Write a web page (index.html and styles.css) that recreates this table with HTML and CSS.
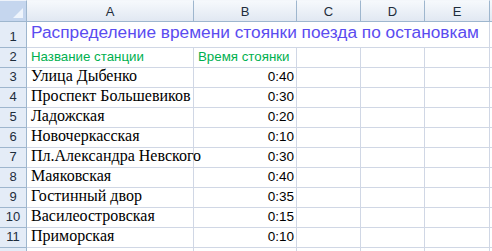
FILE: index.html
```html
<!DOCTYPE html>
<html lang="ru">
<head>
<meta charset="utf-8">
<link rel="stylesheet" href="styles.css">
</head>
<body>
<div class="sheet">
  <div class="corner"><span class="tri"></span></div>
  <div class="colhead">A</div>
  <div class="colhead">B</div>
  <div class="colhead">C</div>
  <div class="colhead">D</div>
  <div class="colhead">E</div>
  <div class="colhead tail"></div>

  <div class="rowhead">1</div>
  <div class="cell title span5">Распределение времени стоянки поезда по остановкам</div>
  <div class="cell tail"></div>

  <div class="rowhead">2</div>
  <div class="cell green">Название станции</div>
  <div class="cell green">Время стоянки</div>
  <div class="cell"></div><div class="cell"></div><div class="cell"></div><div class="cell tail"></div>

  <div class="rowhead">3</div>
  <div class="cell serif">Улица Дыбенко</div>
  <div class="cell num">0:40</div>
  <div class="cell"></div><div class="cell"></div><div class="cell"></div><div class="cell tail"></div>

  <div class="rowhead">4</div>
  <div class="cell serif">Проспект Большевиков</div>
  <div class="cell num">0:30</div>
  <div class="cell"></div><div class="cell"></div><div class="cell"></div><div class="cell tail"></div>

  <div class="rowhead">5</div>
  <div class="cell serif">Ладожская</div>
  <div class="cell num">0:20</div>
  <div class="cell"></div><div class="cell"></div><div class="cell"></div><div class="cell tail"></div>

  <div class="rowhead">6</div>
  <div class="cell serif">Новочеркасская</div>
  <div class="cell num">0:10</div>
  <div class="cell"></div><div class="cell"></div><div class="cell"></div><div class="cell tail"></div>

  <div class="rowhead">7</div>
  <div class="cell serif">Пл.Александра Невского</div>
  <div class="cell num">0:30</div>
  <div class="cell"></div><div class="cell"></div><div class="cell"></div><div class="cell tail"></div>

  <div class="rowhead">8</div>
  <div class="cell serif">Маяковская</div>
  <div class="cell num">0:40</div>
  <div class="cell"></div><div class="cell"></div><div class="cell"></div><div class="cell tail"></div>

  <div class="rowhead">9</div>
  <div class="cell serif">Гостинный двор</div>
  <div class="cell num">0:35</div>
  <div class="cell"></div><div class="cell"></div><div class="cell"></div><div class="cell tail"></div>

  <div class="rowhead">10</div>
  <div class="cell serif">Василеостровская</div>
  <div class="cell num">0:15</div>
  <div class="cell"></div><div class="cell"></div><div class="cell"></div><div class="cell tail"></div>

  <div class="rowhead">11</div>
  <div class="cell serif">Приморская</div>
  <div class="cell num">0:10</div>
  <div class="cell"></div><div class="cell"></div><div class="cell"></div><div class="cell tail"></div>

  <div class="rowhead"></div>
  <div class="cell"></div><div class="cell"></div><div class="cell"></div><div class="cell"></div><div class="cell"></div><div class="cell tail"></div>
</div>
</body>
</html>
```
FILE: styles.css
```css
html, body {
  margin: 0;
  padding: 0;
  background: #ffffff;
  overflow: hidden;
}

.sheet {
  display: grid;
  grid-template-columns: 27px 167px 103px 64px 64px 65px 1fr;
  grid-template-rows: 22px 26px 20px repeat(9, 20px) 20px;
  width: 492px;
  height: 251px;
  overflow: hidden;
  font-family: "Liberation Sans", Arial, sans-serif;
}

.corner {
  position: relative;
  background: #c5d6ee;
  border-right: 1px solid #9eb6ce;
  border-bottom: 1px solid #9eb6ce;
  border-top: 1px solid #eef3fa;
  box-sizing: border-box;
}

.corner .tri {
  position: absolute;
  right: 3px;
  bottom: 3px;
  width: 0;
  height: 0;
  border-left: 10px solid transparent;
  border-bottom: 10px solid #eef4fc;
}

.colhead {
  background: linear-gradient(#f6f9fc, #e1e8f2);
  border-top: 1px solid #f4f7fb;
  border-right: 1px solid #9eb6ce;
  border-bottom: 1px solid #9eb6ce;
  box-sizing: border-box;
  font-size: 13px;
  color: #1e2d3c;
  display: flex;
  align-items: center;
  justify-content: center;
  padding-top: 1px;
}

.colhead.tail {
  border-right: none;
}

.rowhead {
  background: #e4ecf7;
  border-right: 1px solid #9eb6ce;
  border-bottom: 1px solid #9eb6ce;
  box-sizing: border-box;
  font-size: 13px;
  color: #1e2d3c;
  display: flex;
  align-items: flex-end;
  justify-content: center;
  padding-bottom: 3px;
}

.cell {
  border-right: 1px solid #d0d7e5;
  border-bottom: 1px solid #d0d7e5;
  box-sizing: border-box;
  display: flex;
  align-items: flex-end;
  padding: 0 3px 3px 4px;
  white-space: nowrap;
  overflow: visible;
  min-width: 0;
}

.cell.tail {
  border-right: none;
}

.span5 {
  grid-column: span 5;
}

.title {
  font-size: 17.3px;
  color: #5a4cf0;
  padding-bottom: 4px;
}

.green {
  font-size: 13.3px;
  color: #00b050;
  padding-bottom: 3px;
}

.serif {
  font-family: "Liberation Serif", "Times New Roman", serif;
  font-size: 16px;
  color: #000000;
  padding-bottom: 2px;
}

.num {
  justify-content: flex-end;
  font-size: 13.5px;
  color: #000000;
  padding-right: 2px;
  padding-bottom: 3px;
}
```
